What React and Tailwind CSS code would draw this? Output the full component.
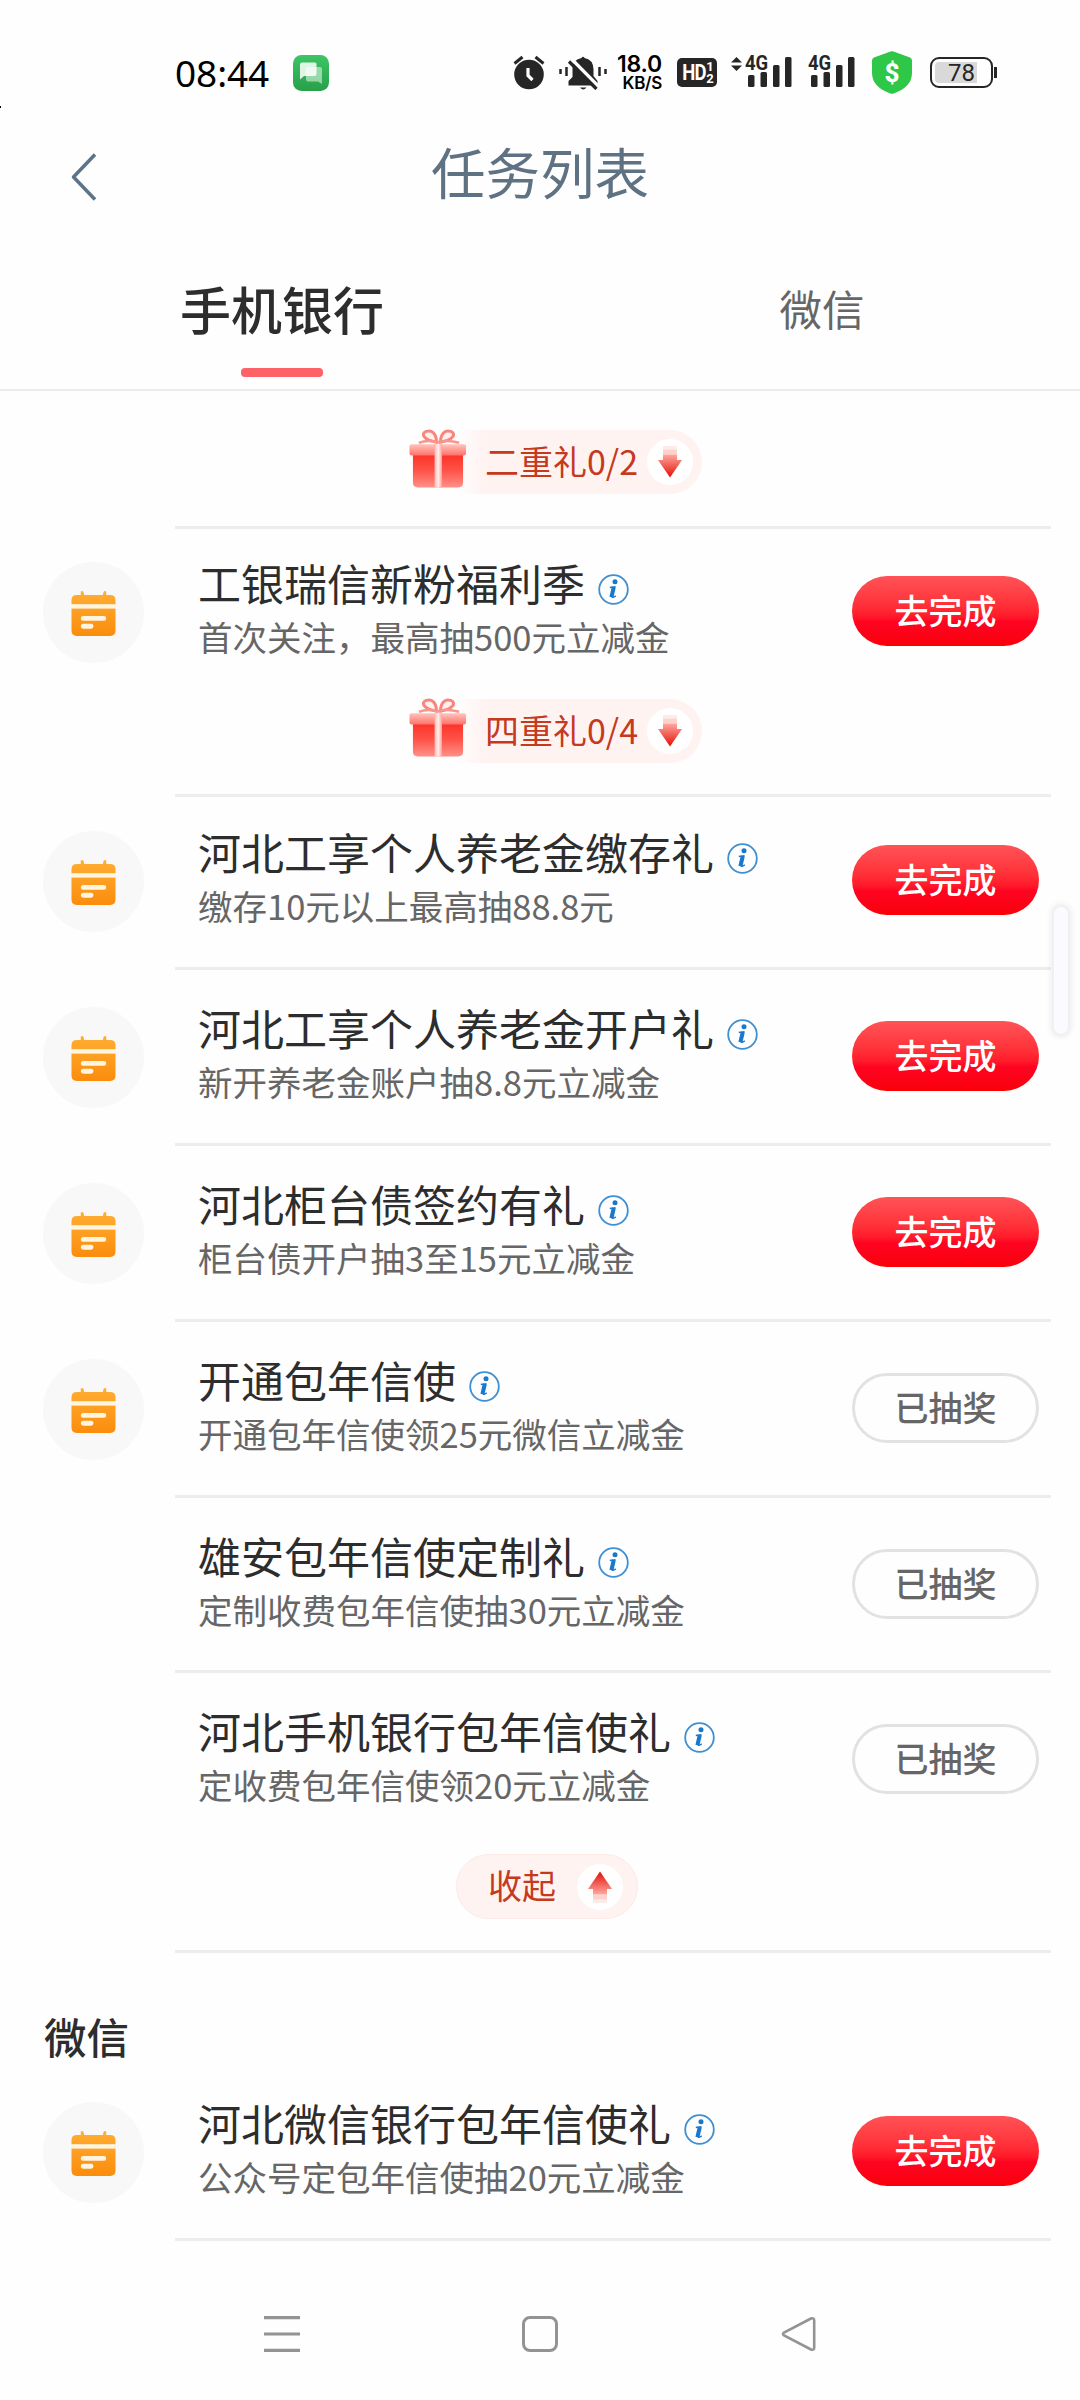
const banking = [
    { title: "河北工享个人养老金缴存礼", desc: "缴存10元以上最高抽88.8元", icon: true, height: "h-[170px] pt-[34px]" },
    { title: "河北工享个人养老金开户礼", desc: "新开养老金账户抽8.8元立减金", icon: true, height: "h-[173px] pt-[37px]" },
    { title: "河北柜台债签约有礼", desc: "柜台债开户抽3至15元立减金", icon: true, height: "h-[173px] pt-[37px]" },
    { title: "开通包年信使", desc: "开通包年信使领25元微信立减金", icon: true, done: true, height: "h-[173px] pt-[37px]" },
    { title: "雄安包年信使定制礼", desc: "定制收费包年信使抽30元立减金", done: true, height: "h-[172px] pt-[37px]" },
];

function SignalBars({ x }) {
    return (
        <g fill="#262626">
            <rect x={x} y="19" width="6.5" height="12" rx="1.5" />
            <rect x={x + 12.5} y="16" width="6.5" height="15" rx="1.5" />
            <rect x={x + 25} y="9" width="6.5" height="22" rx="1.5" />
            <rect x={x + 37} y="1" width="6.5" height="30" rx="1.5" />
        </g>
    );
}

function StatusBar() {
    return (
        <div className="flex h-[120px] items-center pl-[175px] pt-[25px] text-[#262626]">
            <span className="w-[94px] whitespace-nowrap font-['Noto_Sans'] text-[37px] leading-none tracking-[-0.1px] text-black">08:44</span>

            {/* Messages */}
            <svg className="ml-[24px] shrink-0" width="36" height="36" viewBox="0 0 36 36">
                <defs>
                    <linearGradient id="msg" x1="0" y1="0" x2="0" y2="1">
                        <stop offset="0" stopColor="#3dc566" />
                        <stop offset="1" stopColor="#27a049" />
                    </linearGradient>
                </defs>
                <rect width="36" height="36" rx="8.5" fill="url(#msg)" />
                <path d="M14.500 12h12.500q2 0 2 2v15l-4-2.500H15q-2 0-2-2V14z" fill="#fff" opacity=".5" />
                <path d="M9 7.500h13q1.500 0 1.500 1.500v10q0 2-2 2H11l-4 3.500V9.500q0-2 2-2z" fill="#fff" opacity=".85" />
            </svg>

            {/* Alarm */}
            <svg className="ml-[184px] shrink-0" width="32" height="35" viewBox="0 0 32 35">
                <circle cx="16" cy="19.500" r="14.800" fill="#262626" />
                <path d="M1.500 8.500l8-6.500M30.500 8.500l-8-6.500" stroke="#262626" strokeWidth="3" />
                <path d="M15 13v7.500l4.500 4.500" stroke="#fff" strokeWidth="3.200" fill="none" />
            </svg>

            {/* Muted bell */}
            <svg className="ml-[14px] shrink-0" width="48" height="34" viewBox="0 0 48 34">
                <path d="M22.500 2q1.500-2.500 3 0Q34 3.500 34.500 13v7l4 5v4.500H9.500V25l4-4v-9q.5-8.500 9-10z" fill="#262626" />
                <path d="M21 31.500h6.500q-3.200 4-6.500 0z" fill="#262626" />
                <path d="M12.500 3L41 32" stroke="#fff" strokeWidth="3.500" />
                <path d="M10 5.500L37.500 33" stroke="#262626" strokeWidth="3.200" />
                <path d="M1.500 13v5M7.500 11v9M40.500 11v9M46.500 13v5" stroke="#262626" strokeWidth="2.500" />
            </svg>

            <div className="ml-[9px] flex w-[46px] flex-col items-end whitespace-nowrap font-[Inter] text-black">
                <span className="text-[23px] font-semibold leading-[20px] tracking-[-0.2px]">18.0</span>
                <span className="text-[17px] font-semibold leading-[18px] tracking-[-0.3px]">KB/S</span>
            </div>

            {/* HD 1/2 */}
            <div className="ml-[15px] flex h-[29px] w-[40px] items-center justify-center rounded-[5px] bg-[#262626] font-[Roboto] font-bold text-white">
                <span className="text-[22px] leading-none tracking-[-1px] [transform:scaleX(.84)]">HD</span>
                <span className="-ml-[2px] flex flex-col text-[13px] leading-[12px]">
                    <span>1</span>
                    <span>2</span>
                </span>
            </div>

            <div className="relative ml-[14px] h-[33px] w-[62px]">
                <svg width="62" height="33" viewBox="0 0 62 33">
                    <path d="M0 6.500L5.500 1l5.500 5.500zM0 9.500h11L5.500 15z" fill="#262626" />
                    <SignalBars x={17} />
                </svg>
                <span className="absolute -top-[3px] left-[14px] origin-left font-[Roboto] text-[21px] font-bold leading-[21px] [transform:scaleX(.88)]">4G</span>
            </div>
            <div className="relative ml-[15px] h-[33px] w-[47px]">
                <svg width="47" height="33" viewBox="0 0 47 33">
                    <SignalBars x={3} />
                </svg>
                <span className="absolute -top-[3px] left-0 origin-left font-[Roboto] text-[21px] font-bold leading-[21px] [transform:scaleX(.88)]">4G</span>
            </div>

            {/* Payment shield */}
            <div className="relative ml-[17px] flex h-[43px] w-[40px] items-center justify-center">
                <svg className="absolute inset-0" width="40" height="43" viewBox="0 0 40 43">
                    <path d="M18.500.5q1.500-.6 3 0L38 6.500q2 1 2 3V22q0 14-18.500 20.500-1.500.6-3 0Q0 36 0 22V9.500q0-2 2-3z" fill="#2ec748" />
                </svg>
                <span className="relative font-[Roboto] text-[26px] font-extrabold leading-none text-white">$</span>
            </div>

            {/* Battery */}
            <div className="ml-[18px] flex items-center">
                <div className="relative h-[31px] w-[63px] rounded-[9px] border-2 border-[#262626] p-[3px]">
                    <div className="h-full w-[42px] rounded-l-[4px] bg-[#d9d9d9]" />
                    <span className="absolute inset-0 text-center font-[Roboto] text-[24px] leading-[28px]">78</span>
                </div>
                <div className="ml-[1px] h-[11px] w-[2.500px] bg-[#262626]" />
            </div>
        </div>
    );
}

function InfoIcon() {
    return (
        <svg className="ml-[13px] mt-[14px] shrink-0" width="31" height="31" viewBox="0 0 31 31" fill="none">
            <circle cx="15.500" cy="15.500" r="14.300" stroke="#3f8fd2" strokeWidth="1.800" />
            <circle cx="17" cy="7.800" r="2.500" fill="#1878cc" />
            <path d="M11.800 13.500l5-.8-2.500 10q-.3 1.700 3.500-.8" stroke="#1878cc" strokeWidth="1.300" />
            <path d="M15.800 13l-2.400 10.300" stroke="#1878cc" strokeWidth="4" />
        </svg>
    );
}

function CalendarIcon() {
    return (
        <div className="flex size-[101px] items-center justify-center rounded-full bg-[#f8f8f8]">
            <svg className="mt-[2px]" width="45" height="47" viewBox="0 0 46 47">
                <defs>
                    <linearGradient id="cal" x1="0" y1="0" x2="0" y2="1">
                        <stop offset="0" stopColor="#ffae34" />
                        <stop offset="1" stopColor="#fb8c0c" />
                    </linearGradient>
                </defs>
                <path d="M10 1q1.500-1 2.500 0l1 3.500h19L33.500 1q1-1 2.500 0v3.500h4q5.500 0 5.500 5.500v31q0 5.500-5.500 5.500H6Q.5 46.500.5 41V10Q.5 4.500 6 4.500h4z" fill="url(#cal)" />
                <rect y="14" width="46" height="4.500" fill="#fff6e2" />
                <path d="M12.500 28.500h21M12.500 36.500h8" stroke="#fff4e0" strokeWidth="5" strokeLinecap="round" />
            </svg>
        </div>
    );
}

function Task({ title, desc, icon, done }) {
    return (
        <div className="flex h-[101px] pl-[43px]">
            <div className="w-[101px] shrink-0">{icon && <CalendarIcon />}</div>
            <div className="-mt-[2px] ml-[54px] flex-1 whitespace-nowrap">
                <div className="flex h-[46px]">
                    <h3 className="text-[43px] leading-[44px] text-[#2d2d2d]">{title}</h3>
                    <InfoIcon />
                </div>
                <p className="mt-[9px] text-[34.500px] leading-[42px] text-[#666]">{desc}</p>
            </div>
            {done ? (
                <button className="mr-[41px] mt-[14px] h-[70px] w-[187px] rounded-full border-[3px] border-[#e2e2e2] pb-[3px] text-[34px] font-medium leading-none text-[#666]">已抽奖</button>
            ) : (
                <button className="mr-[41px] mt-[14px] h-[70px] w-[187px] rounded-full bg-linear-to-b from-[#ff5257] via-[#ff0422] via-65% to-[#fa0007] pb-[3px] text-[34px] font-medium leading-none text-white">去完成</button>
            )}
        </div>
    );
}

function Arrow({ up }) {
    return (
        <span className="flex size-[46px] items-center justify-center rounded-full bg-white">
            <svg className={up ? "rotate-180" : ""} width="24" height="32" viewBox="0 0 24 32">
                <defs>
                    <linearGradient id="arrow" x1="0" y1="0" x2="0" y2="1">
                        <stop offset="0" stopColor="#ffa79f" />
                        <stop offset="1" stopColor="#e30f05" />
                    </linearGradient>
                </defs>
                <rect x="5" y="0" width="14" height="3.500" fill="#fdebe8" />
                <rect x="5" y="3.500" width="14" height="5" fill="#fcd2cd" />
                <path d="M5 8.500h14V14h5L12 31.500 0 14h5z" fill="url(#arrow)" />
            </svg>
        </span>
    );
}

function GiftBadge({ label }) {
    return (
        <div className="ml-[409px] flex h-[65px] items-center">
            <svg className="z-10 -mt-[6px] shrink-0" width="58" height="60" viewBox="0 0 59 60">
                <defs>
                    <linearGradient id="box" x1="0" y1="0" x2="0" y2="1">
                        <stop offset="0" stopColor="#fb3026" />
                        <stop offset=".5" stopColor="#ff5248" />
                        <stop offset="1" stopColor="#ff9088" />
                    </linearGradient>
                    <linearGradient id="lid" x1="0" y1="0" x2="0" y2="1">
                        <stop offset="0" stopColor="#ffc4bd" />
                        <stop offset="1" stopColor="#ff7168" />
                    </linearGradient>
                    <linearGradient id="ribbon" x1="0" y1="0" x2="1" y2="0">
                        <stop offset="0" stopColor="#ffb5ae" />
                        <stop offset=".5" stopColor="#fff1ef" />
                        <stop offset="1" stopColor="#ff9f98" />
                    </linearGradient>
                </defs>
                <path d="M28 13C28 4 23 0 17.500 2S14 10.500 28 13zm4 0C32 4 37 0 42.500 2S46 10.500 32 13z" fill="#fff0ee" stroke="#f9867d" strokeWidth="3" />
                <path d="M10 13.500q9-3.500 19-.5 10-3 22 .5" fill="none" stroke="#f9958c" strokeWidth="2.500" />
                <path d="M4 24h51v30q0 5-5 5H9q-5 0-5-5z" fill="url(#box)" />
                <rect x=".5" y="15" width="57.500" height="11.500" rx="2" fill="url(#lid)" />
                <rect x="26" y="15" width="7.500" height="44" fill="url(#ribbon)" />
            </svg>
            <div className="-ml-[9px] flex h-[64px] w-[244px] items-center justify-between rounded-r-full bg-linear-to-r from-transparent via-[#fff3f2] via-10% to-[#fff3f2] pl-[27px] pr-[9px] text-[34px] leading-none text-[#c53a1d]">
                <span className="whitespace-nowrap pb-[1px]">{label}</span>
                <Arrow />
            </div>
        </div>
    );
}

function Line() {
    return <div className="ml-[175px] mr-[29px] h-[3px] bg-[#ededed]" />;
}

export default function App() {
    return (
        <div className="relative h-[2400px] w-[1080px] overflow-hidden bg-[#fefefe] font-['Noto_Sans_CJK_SC',sans-serif]">
            <StatusBar />

            <header className="flex h-[107px] items-center">
                <svg className="ml-[71px] mt-[6px]" width="26" height="48" viewBox="0 0 26 48" fill="none">
                    <path d="M24 1.500L2.500 24 24 46.500" stroke="#5d7488" strokeWidth="3.500" strokeLinejoin="round" />
                </svg>
                <h1 className="-mt-[5px] ml-[334px] text-[54.500px] leading-none text-[#5f7283]">任务列表</h1>
            </header>

            {/* Tabs */}
            <nav className="flex h-[164px] border-b-2 border-[#ebebeb] pl-[12px]">
                <div className="flex w-[540px] shrink-0 flex-col items-center pt-[54px]">
                    <span className="h-[87px] text-[51px] font-medium leading-[54px] text-[#2d2d2d]">手机银行</span>
                    <span className="h-[9px] w-[82px] rounded-[4px] bg-[#fc6266]" />
                </div>
                <div className="w-[540px] shrink-0 pt-[55px] text-center text-[42.500px] leading-[52px] text-[#666]">微信</div>
            </nav>

            <main>
                <div className="h-[135px] pt-[38px]">
                    <GiftBadge label="二重礼0/2" />
                </div>
                <Line />
                <div className="h-[265px] pt-[33px]">
                    <Task title="工银瑞信新粉福利季" desc="首次关注，最高抽500元立减金" icon />
                    <div className="h-[35px]" />
                    <GiftBadge label="四重礼0/4" />
                </div>
                <Line />
                {banking.map((task) => (
                    <div key={task.title}>
                        <div className={task.height}>
                            <Task {...task} />
                        </div>
                        <Line />
                    </div>
                ))}
                <div className="h-[277px] pt-[37px]">
                    <Task title="河北手机银行包年信使礼" desc="定收费包年信使领20元立减金" done />
                    <button className="ml-[456px] mt-[43px] flex h-[65px] w-[182px] items-center justify-between rounded-full border border-[#fdeae8] bg-[#fff3f2] pl-[31px] pr-[14px] text-[34px] leading-none text-[#c53a1d]">
                        <span className="pb-[3px]">收起</span>
                        <Arrow up />
                    </button>
                </div>
                <Line />
                <h2 className="h-[149px] pl-[44px] pt-[59px] text-[42.500px] font-medium leading-[48px] text-[#2d2d2d]">微信</h2>
                <div className="h-[136px]">
                    <Task title="河北微信银行包年信使礼" desc="公众号定包年信使抽20元立减金" icon />
                </div>
                <Line />
            </main>

            {/* System navigation */}
            <footer className="flex pl-[264px] pt-[75px]">
                <svg width="36" height="36" viewBox="0 0 36 36">
                    <path d="M0 1.700h36M0 18h36M0 34.300h36" stroke="#939393" strokeWidth="3.200" />
                </svg>
                <div className="ml-[222px] size-[36px] rounded-[8px] border-[3px] border-[#939393]" />
                <svg className="ml-[223px]" width="35" height="36" viewBox="0 0 35 36" fill="none">
                    <path d="M30 2.500L3 16.500q-2 1.500 0 3L30 33.500q3.200 1 3.200-2V4.500q0-3-3.200-2z" stroke="#939393" strokeWidth="2.600" />
                </svg>
            </footer>

            {/* Edge panel handle */}
            <div className="absolute right-[10px] top-[905px] h-[131px] w-[18px] rounded-full border-2 border-[#f0f0f2] bg-[#fafaff] shadow-[0_0_5px_2px_rgba(0,0,0,0.06)]" />
            <div className="absolute left-0 top-[106px] h-[2px] w-[1px] bg-black" />
        </div>
    );
}
